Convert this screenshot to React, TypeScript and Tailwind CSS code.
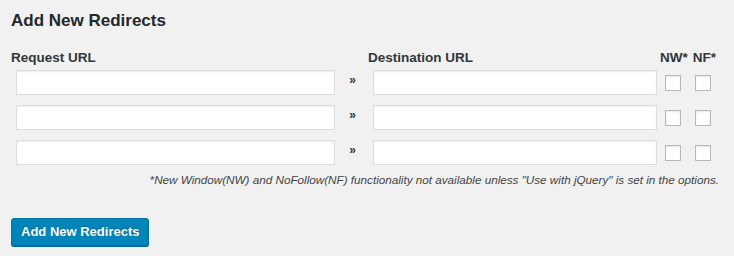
const ROWS = [0, 1, 2]

function UrlInput() {
  return (
    <input
      type="text"
      className="block w-full h-[25px] bg-white border border-[#dddddd] shadow-[inset_0_1px_2px_rgba(0,0,0,0.07)] outline-none"
    />
  )
}

function Box() {
  return (
    <span className="block w-4 h-4 bg-white border border-[#b4b9be] shadow-[inset_0_1px_2px_rgba(0,0,0,0.1)]" />
  )
}

export default function App() {
  return (
    <div className="w-[734px] h-[256px] bg-[#f1f1f1] text-[#23282d] font-['Liberation_Sans',Arial,sans-serif] pl-[11px] pt-[10px] overflow-hidden">
      <h2 className="text-[17px] leading-[22px] font-bold">Add New Redirects</h2>

      <div className="mt-[19px] w-[712px]">
        {/* header row */}
        <div className="flex items-end h-[14px] text-[13.5px] leading-[14px] font-bold text-[#32373c]">
          <div className="w-[357px]">Request URL</div>
          <div className="w-[292px]">Destination URL</div>
          <div className="flex gap-[5px]">
            <span>NW*</span>
            <span>NF*</span>
          </div>
        </div>

        <div className="mt-[5px] flex flex-col gap-[10px]">
          {ROWS.map((r) => (
            <div key={r} className="flex items-center h-[25px]">
              <div className="w-[329px] px-[5px]">
                <UrlInput />
              </div>
              <div className="w-[28px] pr-[3px] text-center text-[12px] leading-none font-bold text-[#32373c] pb-[6px]">»</div>
              <div className="w-[294px] px-[5px]">
                <UrlInput />
              </div>
              <div className="flex gap-[14px] pl-[3px]">
                <Box />
                <Box />
              </div>
            </div>
          ))}
        </div>

        <p className="mt-[8px] text-right pr-[4px] text-[11.7px] leading-[14px] italic text-[#444]">
          *New Window(NW) and NoFollow(NF) functionality not available unless "Use with jQuery" is set in the options.
        </p>
      </div>

      <button className="mt-[31px] h-[28px] px-[9px] rounded-[3px] bg-[#0085ba] border border-[#0073aa] shadow-[0_1px_0_#006799] text-white text-[13px] font-bold leading-[26px] [text-shadow:0_-1px_1px_#006799]">
        Add New Redirects
      </button>
    </div>
  )
}
